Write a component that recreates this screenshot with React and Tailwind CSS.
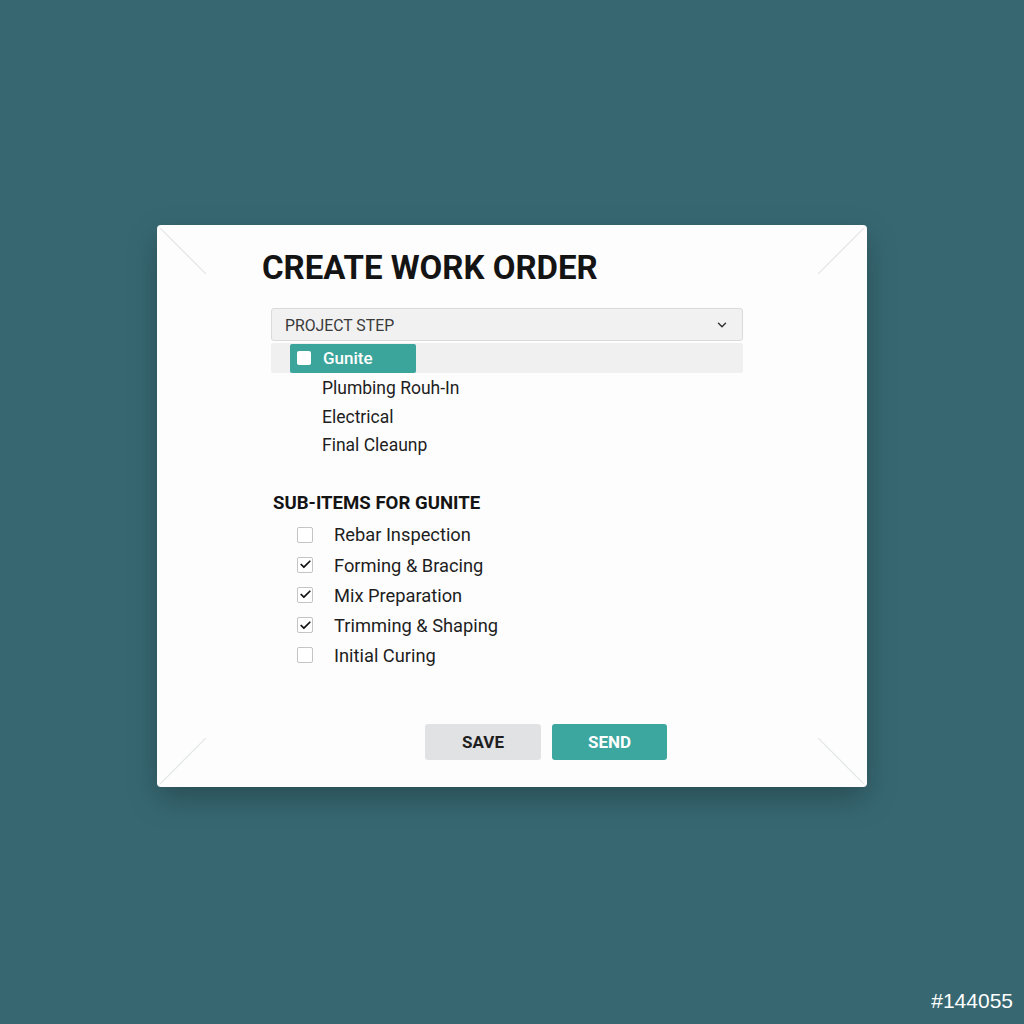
import React from 'react';
import { ChevronDown, Check } from 'lucide-react';

const steps = ['Plumbing Rouh-In', 'Electrical', 'Final Cleaunp'];

const subItems = [
    { label: 'Rebar Inspection', checked: false },
    { label: 'Forming & Bracing', checked: true },
    { label: 'Mix Preparation', checked: true },
    { label: 'Trimming & Shaping', checked: true },
    { label: 'Initial Curing', checked: false },
];

const CornerLine = ({ className, flip }) => (
    <svg className={`absolute w-[46px] h-[46px] ${className}`} viewBox="0 0 46 46">
        {flip ? (
            <line x1="46" y1="0" x2="0" y2="46" stroke="#e3e5e6" strokeWidth="1.2" />
        ) : (
            <line x1="0" y1="0" x2="46" y2="46" stroke="#e3e5e6" strokeWidth="1.2" />
        )}
    </svg>
);

const App = () => {
    return (
        <div className="w-[1024px] h-[1024px] bg-[#376872] relative overflow-hidden font-['Roboto',sans-serif]">
            <div className="pt-[225px] flex justify-center">
                <div className="relative w-[710px] h-[562px] bg-[#fdfdfd] rounded-[4px] shadow-[0_12px_30px_rgba(0,0,0,0.25)]">
                    {/* Corner decorations */}
                    <CornerLine className="left-[3px] top-[3px]" />
                    <CornerLine className="right-[3px] top-[3px]" flip />
                    <CornerLine className="left-[3px] bottom-[3px]" flip />
                    <CornerLine className="right-[3px] bottom-[3px]" />

                    <div className="pl-[105px] pt-[24px]">
                        <h1 className="text-[33px] leading-[38px] font-bold text-[#141414]">CREATE WORK ORDER</h1>
                    </div>

                    {/* Select */}
                    <div className="ml-[114px] mr-[124px] mt-[21px]">
                        <div className="h-[33px] flex items-center justify-between px-[13px] bg-[#f1f1f1] border border-[#dadada] rounded-[3px]">
                            <span className="text-[15.8px] text-[#3a3a3a] pt-[2px]">PROJECT STEP</span>
                            <ChevronDown size={14} strokeWidth={2.5} className="text-[#333]" />
                        </div>
                        <div className="mt-[2px] h-[30px] bg-[#f0f0f0] rounded-[2px] flex items-center pl-[19px]">
                            <div className="h-[29px] w-[126px] bg-[#3ba59c] rounded-[2px] flex items-center pl-[7px]">
                                <span className="w-[14px] h-[14px] bg-white rounded-[2px]"></span>
                                <span className="ml-[12px] text-[17px] text-white font-medium pt-[2px]">Gunite</span>
                            </div>
                        </div>
                        <div className="pl-[51px] flex flex-col">
                            {steps.map((s) => (
                                <div key={s} className="h-[28.5px] flex items-center pt-[2px] text-[17.5px] text-[#1e1e1e]">{s}</div>
                            ))}
                        </div>
                    </div>

                    {/* Sub items */}
                    <div className="ml-[116px] mt-[33px]">
                        <h2 className="text-[18.6px] leading-[22px] font-bold text-[#141414]">SUB-ITEMS FOR GUNITE</h2>
                        <div className="mt-[6px] pl-[24px] flex flex-col">
                            {subItems.map((it) => (
                                <div key={it.label} className="h-[30.2px] flex items-center">
                                    <span className="w-[16px] h-[16px] border border-[#c4c4c4] rounded-[2px] bg-white flex items-center justify-center">
                                        {it.checked && <Check size={13} strokeWidth={3.2} className="text-[#111]" />}
                                    </span>
                                    <span className="ml-[21px] text-[18.3px] text-[#1e1e1e] pt-[1px]">{it.label}</span>
                                </div>
                            ))}
                        </div>
                    </div>

                    {/* Buttons */}
                    <div className="absolute left-[268px] top-[499px] flex gap-[11px]">
                        <button className="w-[116px] h-[36px] bg-[#e1e2e4] rounded-[3px] text-[17px] font-bold text-[#1e1e1e] pt-[1px]">SAVE</button>
                        <button className="w-[115px] h-[36px] bg-[#3ba79f] rounded-[3px] text-[17px] font-bold text-white pt-[1px]">SEND</button>
                    </div>
                </div>
            </div>

            <div className="absolute right-[11px] bottom-[8px] text-[21px] text-white font-['Liberation_Sans',sans-serif]">#144055</div>
        </div>
    );
};

export default App;
